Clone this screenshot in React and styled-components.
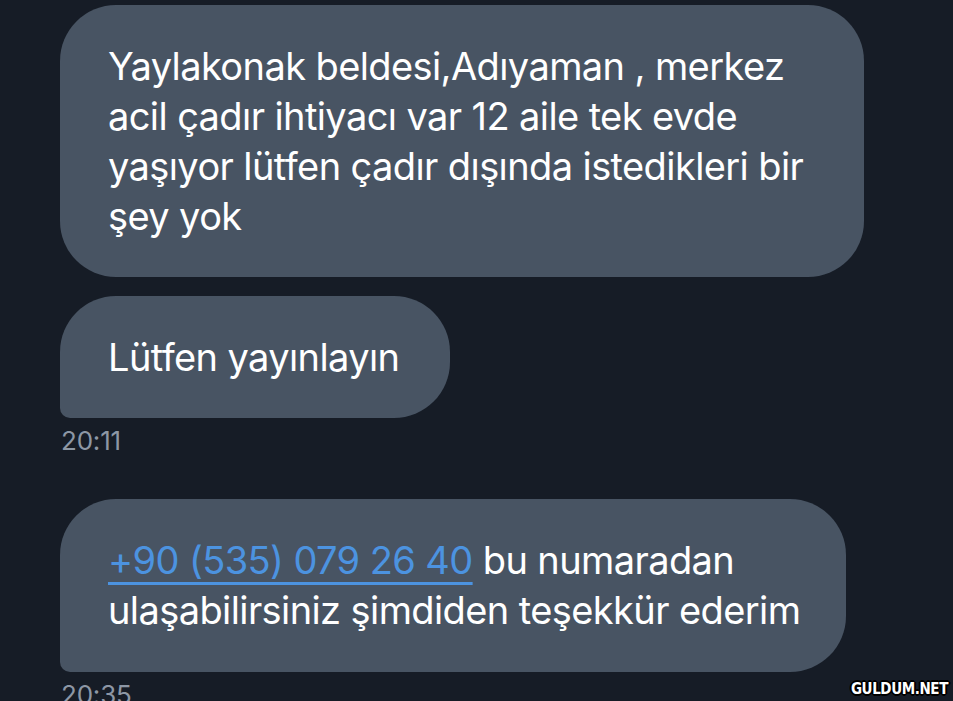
import React from "react";
import styled, { createGlobalStyle } from "styled-components";

const Global = createGlobalStyle`
  html, body { margin: 0; padding: 0; background: #161c26; }
  body { overflow: hidden; }
`;

const Screen = styled.div`
  position: relative;
  width: 953px;
  height: 701px;
  overflow: hidden;
  background: #161c26;
  font-family: Inter, "Noto Sans", sans-serif;
  padding: 5px 0 0 60px;
  box-sizing: border-box;
  display: flex;
  flex-direction: column;
  align-items: flex-start;
`;

const Group = styled.div`
  display: flex;
  flex-direction: column;
  align-items: flex-start;
  gap: 19px;
  margin-top: ${(p) => p.$mt || 0}px;
`;

const Bubble = styled.div`
  box-sizing: border-box;
  width: ${(p) => p.$w}px;
  height: ${(p) => p.$h}px;
  background: #485463;
  color: #ffffff;
  border-radius: 56px 56px 56px ${(p) => (p.$tail ? "10px" : "56px")};
  padding: 36px 40px 0 48px;
  font-size: 38px;
  line-height: 50px;
  letter-spacing: -0.6px;
  display: flex;
  flex-direction: column;
`;

const Line = styled.span`
  display: block;
  white-space: nowrap;
`;

const Phone = styled.a`
  color: #4c93e0;
  text-decoration: underline;
  text-decoration-thickness: 3px;
  text-underline-offset: 8px;
  text-decoration-skip-ink: auto;
`;

const Time = styled.div`
  color: #8d97a5;
  font-size: 26px;
  line-height: 28px;
  margin-top: 9px;
  padding-left: 1px;
  letter-spacing: -0.2px;
`;

const Watermark = styled.div`
  position: absolute;
  right: 5px;
  bottom: 3px;
  font-family: "DejaVu Sans Condensed", "DejaVu Sans", sans-serif;
  font-weight: 700;
  font-size: 15px;
  letter-spacing: -0.4px;
  color: #ffffff;
  text-shadow: -1px -1px 0 #000, 1px -1px 0 #000, -1px 1px 0 #000, 1px 1px 0 #000,
    0 2px 0 #000, 2px 0 0 #000, -2px 0 0 #000, 0 -2px 0 #000;
`;

export default function App() {
  return (
    <>
      <Global />
      <Screen>
        <Group>
          <Bubble $w={804} $h={272}>
            <Line>Yaylakonak beldesi,Adıyaman , merkez</Line>
            <Line>acil çadır ihtiyacı var 12 aile tek evde</Line>
            <Line>yaşıyor lütfen çadır dışında istedikleri bir</Line>
            <Line>şey yok</Line>
          </Bubble>
          <Bubble $w={390} $h={122} $tail>
            <Line>Lütfen yayınlayın</Line>
          </Bubble>
        </Group>
        <Time>20:11</Time>
        <Group $mt={44}>
          <Bubble $w={786} $h={173} $tail>
            <Line>
              <Phone href="#">+90 (535) 079 26 40</Phone> bu numaradan
            </Line>
            <Line>ulaşabilirsiniz şimdiden teşekkür ederim</Line>
          </Bubble>
        </Group>
        <Time>20:35</Time>
        <Watermark>GULDUM.NET</Watermark>
      </Screen>
    </>
  );
}
